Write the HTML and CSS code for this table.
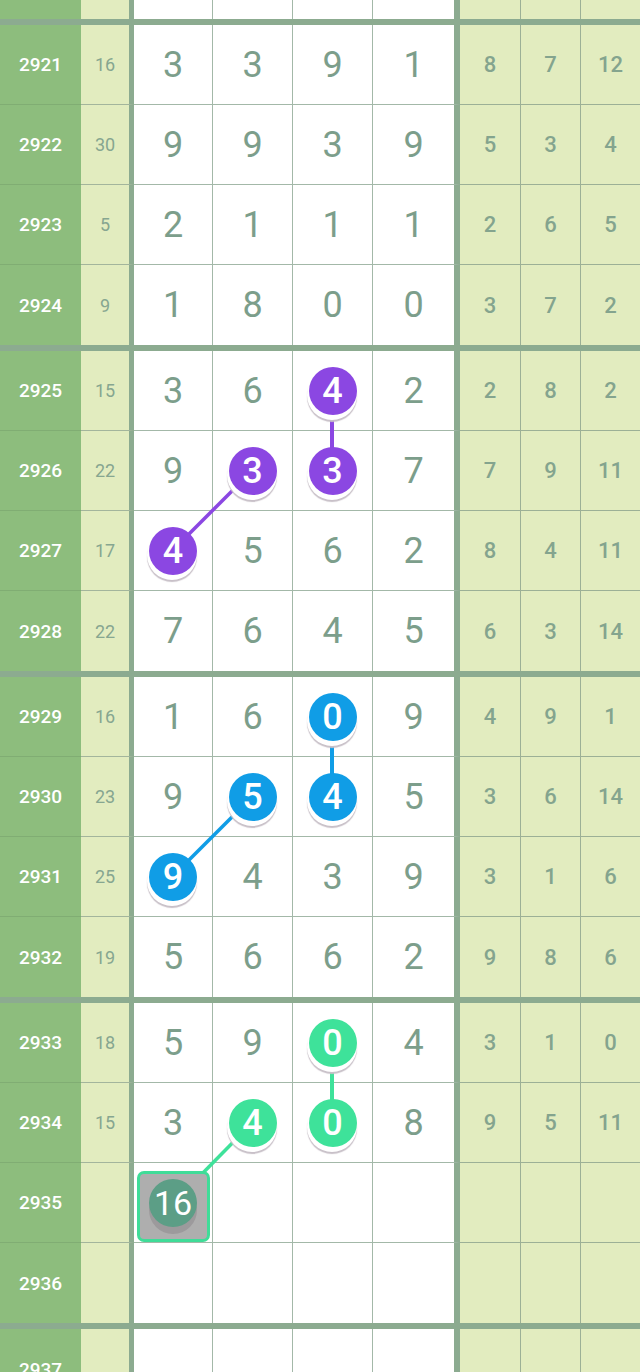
FILE: index.html
```html
<!DOCTYPE html>
<html lang="zh">
<head>
  <meta charset="UTF-8">
  <title>走势图</title>
  <meta name="viewport" content="width=device-width, initial-scale=1.0">
  <link rel="stylesheet" href="styles.css">
</head>
<body>

<div class="board">
  <svg class="links" width="640" height="1372" viewBox="0 0 640 1372">
    <line x1="332" y1="391" x2="332" y2="471" stroke="#8b47e2" stroke-width="4"/>
    <line x1="252" y1="471" x2="172" y2="551" stroke="#8b47e2" stroke-width="3.5"/>
    <line x1="332" y1="717" x2="332" y2="797" stroke="#109de6" stroke-width="4"/>
    <line x1="252" y1="797" x2="172" y2="877" stroke="#109de6" stroke-width="3.5"/>
    <line x1="332" y1="1043" x2="332" y2="1123" stroke="#3ee29a" stroke-width="4"/>
    <line x1="252" y1="1123" x2="196" y2="1180" stroke="#3ee29a" stroke-width="3.5"/>
  </svg>

  <div class="row stub">
    <div class="cell no"></div><div class="cell sum"></div>
    <div class="cell d"></div><div class="cell d"></div><div class="cell d"></div><div class="cell d last"></div>
    <div class="cell r"></div><div class="cell r"></div><div class="cell r end"></div>
  </div>

  <div class="group">
    <div class="row">
      <div class="cell no">2921</div><div class="cell sum">16</div>
      <div class="cell d">3</div><div class="cell d">3</div><div class="cell d">9</div><div class="cell d last">1</div>
      <div class="cell r">8</div><div class="cell r">7</div><div class="cell r end">12</div>
    </div>
    <div class="row">
      <div class="cell no">2922</div><div class="cell sum">30</div>
      <div class="cell d">9</div><div class="cell d">9</div><div class="cell d">3</div><div class="cell d last">9</div>
      <div class="cell r">5</div><div class="cell r">3</div><div class="cell r end">4</div>
    </div>
    <div class="row">
      <div class="cell no">2923</div><div class="cell sum">5</div>
      <div class="cell d">2</div><div class="cell d">1</div><div class="cell d">1</div><div class="cell d last">1</div>
      <div class="cell r">2</div><div class="cell r">6</div><div class="cell r end">5</div>
    </div>
    <div class="row">
      <div class="cell no">2924</div><div class="cell sum">9</div>
      <div class="cell d">1</div><div class="cell d">8</div><div class="cell d">0</div><div class="cell d last">0</div>
      <div class="cell r">3</div><div class="cell r">7</div><div class="cell r end">2</div>
    </div>
  </div>

  <div class="group">
    <div class="row">
      <div class="cell no">2925</div><div class="cell sum">15</div>
      <div class="cell d">3</div><div class="cell d">6</div><div class="cell d"><span class="ball purple">4</span></div><div class="cell d last">2</div>
      <div class="cell r">2</div><div class="cell r">8</div><div class="cell r end">2</div>
    </div>
    <div class="row">
      <div class="cell no">2926</div><div class="cell sum">22</div>
      <div class="cell d">9</div><div class="cell d"><span class="ball purple">3</span></div><div class="cell d"><span class="ball purple">3</span></div><div class="cell d last">7</div>
      <div class="cell r">7</div><div class="cell r">9</div><div class="cell r end">11</div>
    </div>
    <div class="row">
      <div class="cell no">2927</div><div class="cell sum">17</div>
      <div class="cell d"><span class="ball purple">4</span></div><div class="cell d">5</div><div class="cell d">6</div><div class="cell d last">2</div>
      <div class="cell r">8</div><div class="cell r">4</div><div class="cell r end">11</div>
    </div>
    <div class="row">
      <div class="cell no">2928</div><div class="cell sum">22</div>
      <div class="cell d">7</div><div class="cell d">6</div><div class="cell d">4</div><div class="cell d last">5</div>
      <div class="cell r">6</div><div class="cell r">3</div><div class="cell r end">14</div>
    </div>
  </div>

  <div class="group">
    <div class="row">
      <div class="cell no">2929</div><div class="cell sum">16</div>
      <div class="cell d">1</div><div class="cell d">6</div><div class="cell d"><span class="ball blue">0</span></div><div class="cell d last">9</div>
      <div class="cell r">4</div><div class="cell r">9</div><div class="cell r end">1</div>
    </div>
    <div class="row">
      <div class="cell no">2930</div><div class="cell sum">23</div>
      <div class="cell d">9</div><div class="cell d"><span class="ball blue">5</span></div><div class="cell d"><span class="ball blue">4</span></div><div class="cell d last">5</div>
      <div class="cell r">3</div><div class="cell r">6</div><div class="cell r end">14</div>
    </div>
    <div class="row">
      <div class="cell no">2931</div><div class="cell sum">25</div>
      <div class="cell d"><span class="ball blue">9</span></div><div class="cell d">4</div><div class="cell d">3</div><div class="cell d last">9</div>
      <div class="cell r">3</div><div class="cell r">1</div><div class="cell r end">6</div>
    </div>
    <div class="row">
      <div class="cell no">2932</div><div class="cell sum">19</div>
      <div class="cell d">5</div><div class="cell d">6</div><div class="cell d">6</div><div class="cell d last">2</div>
      <div class="cell r">9</div><div class="cell r">8</div><div class="cell r end">6</div>
    </div>
  </div>

  <div class="group">
    <div class="row">
      <div class="cell no">2933</div><div class="cell sum">18</div>
      <div class="cell d">5</div><div class="cell d">9</div><div class="cell d"><span class="ball green">0</span></div><div class="cell d last">4</div>
      <div class="cell r">3</div><div class="cell r">1</div><div class="cell r end">0</div>
    </div>
    <div class="row">
      <div class="cell no">2934</div><div class="cell sum">15</div>
      <div class="cell d">3</div><div class="cell d"><span class="ball green">4</span></div><div class="cell d"><span class="ball green">0</span></div><div class="cell d last">8</div>
      <div class="cell r">9</div><div class="cell r">5</div><div class="cell r end">11</div>
    </div>
    <div class="row">
      <div class="cell no">2935</div><div class="cell sum"></div>
      <div class="cell d top"><span class="pick"><span class="ball dark">16</span></span></div><div class="cell d"></div><div class="cell d"></div><div class="cell d last"></div>
      <div class="cell r"></div><div class="cell r"></div><div class="cell r end"></div>
    </div>
    <div class="row">
      <div class="cell no">2936</div><div class="cell sum"></div>
      <div class="cell d"></div><div class="cell d"></div><div class="cell d"></div><div class="cell d last"></div>
      <div class="cell r"></div><div class="cell r"></div><div class="cell r end"></div>
    </div>
  </div>

  <div class="group">
    <div class="row">
      <div class="cell no">2937</div><div class="cell sum"></div>
      <div class="cell d"></div><div class="cell d"></div><div class="cell d"></div><div class="cell d last"></div>
      <div class="cell r"></div><div class="cell r"></div><div class="cell r end"></div>
    </div>
  </div>
</div>

</body>
</html>
```

FILE: styles.css
```css
body {
  margin: 0;
  height: 1372px;
  overflow: hidden;
  background-color: #fff;
  font-family: Roboto, 'Noto Sans', sans-serif;
}
.board {
  position: relative;
  width: 640px;
}
.links {
  position: absolute;
  top: 0;
  left: 0;
  z-index: 1;
}
.group {
  border-top: 6px solid #8cab90;
}
.row {
  display: grid;
  grid-template-columns: 81px 53px 79px 80px 80px 87px 61px 60px 59px;
  height: 80px;
}
.row.stub {
  height: 19px;
}
.cell {
  box-sizing: border-box;
  display: flex;
  align-items: center;
  justify-content: center;
  border-right: 1px solid #a3b8a8;
  border-bottom: 1px solid #a3b8a8;
}
.group .row:last-child .cell,
.row.stub .cell {
  border-bottom: none;
}
.no {
  background-color: #8dbd7d;
  color: #fff;
  font-size: 19px;
  font-weight: 500;
  border-right: none;
  border-bottom-color: #80ad73;
}
.sum {
  background-color: #e2ecbf;
  color: #86a690;
  font-size: 18px;
  border-right: 5px solid #8cab90;
  border-bottom-color: #a3b59c;
}
.d {
  color: #7c9e8b;
  font-size: 36px;
}
.d.last {
  border-right: 6px solid #8cab90;
}
.d.top {
  align-items: flex-start;
  padding-top: 8px;
}
.r {
  background-color: #e2ecbf;
  color: #84a48e;
  font-size: 22px;
  font-weight: 500;
  border-right-color: #9cb096;
  border-bottom-color: #9cb096;
}
.r.end {
  border-right: none;
}
.ball {
  position: relative;
  z-index: 2;
  width: 48px;
  height: 48px;
  border-radius: 50%;
  display: flex;
  align-items: center;
  justify-content: center;
  color: #fff;
  font-size: 36px;
  font-weight: 500;
  box-shadow: -1px 4px 0 1px #fff, -1px 6px 1px 1px #c8c0c8;
}
.purple {
  background-color: #8b47e2;
}
.blue {
  background-color: #109de6;
}
.green {
  background-color: #3ee29a;
}
.pick {
  box-sizing: border-box;
  width: 73px;
  height: 71px;
  border: 3px solid #3fdc98;
  border-radius: 7px;
  background-color: #aeaeae;
  display: flex;
  justify-content: center;
  padding-top: 5px;
  position: relative;
  z-index: 2;
}
.ball.dark {
  background-color: #5c9e86;
  font-weight: 400;
  font-size: 34px;
  box-shadow: 0 7px 0 0 #9c9a9c;
}
```
